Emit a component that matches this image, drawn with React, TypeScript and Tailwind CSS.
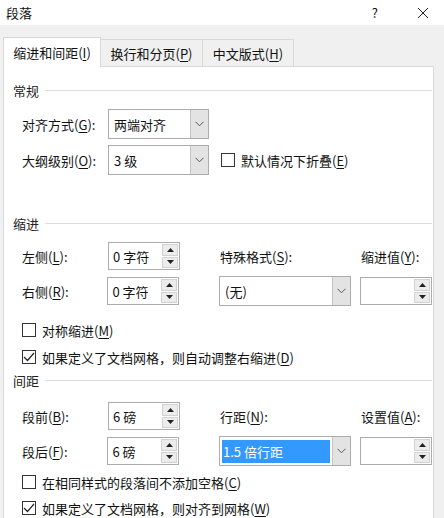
import React from "react";

const font = "font-['Noto_Sans_CJK_SC',sans-serif]";

function U({ children }: { children: React.ReactNode }) {
  return <span className="underline underline-offset-[2px] decoration-1">{children}</span>;
}

function Label({ text, k, width }: { text: string; k: string; width?: string }) {
  return (
    <div className={`${width ?? ""} text-[13px] leading-none text-[#111] whitespace-nowrap`}>
      {text}(<U>{k}</U>):
    </div>
  );
}

function Chevron() {
  return (
    <svg width="9" height="6" viewBox="0 0 9 6">
      <polyline points="0.5,0.8 4.5,4.8 8.5,0.8" fill="none" stroke="#555" strokeWidth="1" />
    </svg>
  );
}

function Select({ value, w, highlight }: { value: string; w: string; highlight?: boolean }) {
  return (
    <div className={`${w} h-[30px] flex border border-[#acacac] bg-white`}>
      <div className="flex-1 flex items-center px-[2px]">
        {highlight ? (
          <div className="h-[23px] w-full bg-[#3399ff] text-white flex items-center pl-[1px] text-[13px] leading-none">
            {value}
          </div>
        ) : (
          <span className="pl-[3px] text-[13px] leading-none text-[#111]">{value}</span>
        )}
      </div>
      <div className="w-[18px] bg-[#e3e3e3] border-l border-[#c4c4c4] flex items-center justify-center">
        <Chevron />
      </div>
    </div>
  );
}

function Arrow({ up }: { up?: boolean }) {
  return (
    <svg width="7" height="4" viewBox="0 0 7 4">
      {up ? <polygon points="0,4 7,4 3.5,0" fill="#222" /> : <polygon points="0,0 7,0 3.5,4" fill="#222" />}
    </svg>
  );
}

function Spin({ value }: { value: string }) {
  return (
    <div className="w-[72px] h-[28px] flex border border-[#acacac] bg-white">
      <div className="flex-1 flex items-center pl-[4px] text-[13px] leading-none text-[#111] whitespace-nowrap">
        {value}
      </div>
      <div className="w-[18px] flex flex-col p-[1px] gap-[1px]">
        <div className="flex-1 bg-[#ececec] border border-[#d2d2d2] flex items-center justify-center">
          <Arrow up />
        </div>
        <div className="flex-1 bg-[#ececec] border border-[#d2d2d2] flex items-center justify-center">
          <Arrow />
        </div>
      </div>
    </div>
  );
}

function Check({ checked, text, k, mt }: { checked?: boolean; text: string; k: string; mt: string }) {
  return (
    <div className={`${mt} h-[20px] flex items-center gap-[6px] ml-[9px]`}>
      <div className="w-[14px] h-[14px] border border-[#333] bg-white flex items-center justify-center">
        {checked && (
          <svg width="12" height="10" viewBox="0 0 12 10">
            <polyline points="1,5 4.5,8.5 11,1" fill="none" stroke="#222" strokeWidth="1.2" />
          </svg>
        )}
      </div>
      <div className="text-[13px] leading-none text-[#111] whitespace-nowrap">
        {text}(<U>{k}</U>)
      </div>
    </div>
  );
}

function Section({ title, mt }: { title: string; mt: string }) {
  return (
    <div className={`${mt} h-[20px] flex items-center gap-[6px]`}>
      <span className="text-[13px] leading-none text-[#222]">{title}</span>
      <div className="flex-1 h-px bg-[#dcdcdc]" />
    </div>
  );
}

export default function App() {
  return (
    <div className={`${font} w-[444px] h-[518px] bg-[#f0f0f0] overflow-hidden`}>
      {/* title bar */}
      <div className="h-[25px] bg-white flex items-center justify-between pl-[6px]">
        <span className="text-[13px] leading-none text-[#111]">段落</span>
        <div className="flex items-center">
          <span className="text-[13px] leading-none text-[#111] mr-[39px]">?</span>
          <svg width="12" height="12" viewBox="0 0 12 12" className="mr-[15px]">
            <path d="M1 1 L11 11 M11 1 L1 11" stroke="#222" strokeWidth="1" />
          </svg>
        </div>
      </div>

      {/* tabs */}
      <div className="pt-[12px] pl-[3px] flex items-end">
        <div className="w-[98px] h-[30px] bg-white border border-b-0 border-[#d9d9d9] flex items-center justify-center text-[13px] leading-none text-[#111] relative z-10 -mb-px">
          缩进和间距(<U>I</U>)
        </div>
        <div className="w-[102px] h-[27px] border border-l-0 border-b-0 border-[#d9d9d9] flex items-center justify-center text-[13px] leading-none text-[#111]">
          换行和分页(<U>P</U>)
        </div>
        <div className="w-[91px] h-[27px] border border-l-0 border-b-0 border-[#d9d9d9] flex items-center justify-center text-[13px] leading-none text-[#111]">
          中文版式(<U>H</U>)
        </div>
      </div>

      {/* panel */}
      <div className="ml-[3px] w-[431px] h-[460px] bg-white border border-[#d9d9d9] pl-[9px] pr-[1px]">
        <Section title="常规" mt="mt-[13px]" />

        <div className="mt-[9px] ml-[9px] flex items-center">
          <Label text="对齐方式" k="G" width="w-[86px]" />
          <Select value="两端对齐" w="w-[101px]" />
        </div>
        <div className="mt-[6px] ml-[9px] flex items-center">
          <Label text="大纲级别" k="O" width="w-[86px]" />
          <Select value="3 级" w="w-[101px]" />
          <div className="ml-[12px] w-[14px] h-[14px] border border-[#333] bg-white" />
          <div className="ml-[6px] text-[13px] leading-none text-[#111] whitespace-nowrap">
            默认情况下折叠(<U>E</U>)
          </div>
        </div>

        <Section title="缩进" mt="mt-[38px]" />

        <div className="mt-[9px] ml-[9px] flex items-center h-[28px]">
          <Label text="左侧" k="L" width="w-[86px]" />
          <Spin value="0 字符" />
          <div className="ml-[40px] w-[132px]">
            <Label text="特殊格式" k="S" />
          </div>
          <div className="ml-[9px]">
            <Label text="缩进值" k="Y" />
          </div>
        </div>
        <div className="mt-[6px] ml-[9px] flex items-center h-[30px]">
          <Label text="右侧" k="R" width="w-[86px]" />
          <Spin value="0 字符" />
          <div className="ml-[40px]">
            <Select value="(无)" w="w-[132px]" />
          </div>
          <div className="ml-[9px]">
            <Spin value="" />
          </div>
        </div>

        <Check text="对称缩进" k="M" mt="mt-[14px]" />
        <Check checked text="如果定义了文档网格，则自动调整右缩进" k="D" mt="mt-[7px]" />

        <Section title="间距" mt="mt-[3px]" />

        <div className="mt-[12px] ml-[9px] flex items-center h-[28px]">
          <Label text="段前" k="B" width="w-[86px]" />
          <Spin value="6 磅" />
          <div className="ml-[40px] w-[132px]">
            <Label text="行距" k="N" />
          </div>
          <div className="ml-[9px]">
            <Label text="设置值" k="A" />
          </div>
        </div>
        <div className="mt-[7px] ml-[9px] flex items-center h-[28px]">
          <Label text="段后" k="F" width="w-[86px]" />
          <Spin value="6 磅" />
          <div className="ml-[40px]">
            <Select value="1.5 倍行距" w="w-[132px]" highlight />
          </div>
          <div className="ml-[9px]">
            <Spin value="" />
          </div>
        </div>

        <Check text="在相同样式的段落间不添加空格" k="C" mt="mt-[7px]" />
        <Check checked text="如果定义了文档网格，则对齐到网格" k="W" mt="mt-[6px]" />
      </div>
    </div>
  );
}
